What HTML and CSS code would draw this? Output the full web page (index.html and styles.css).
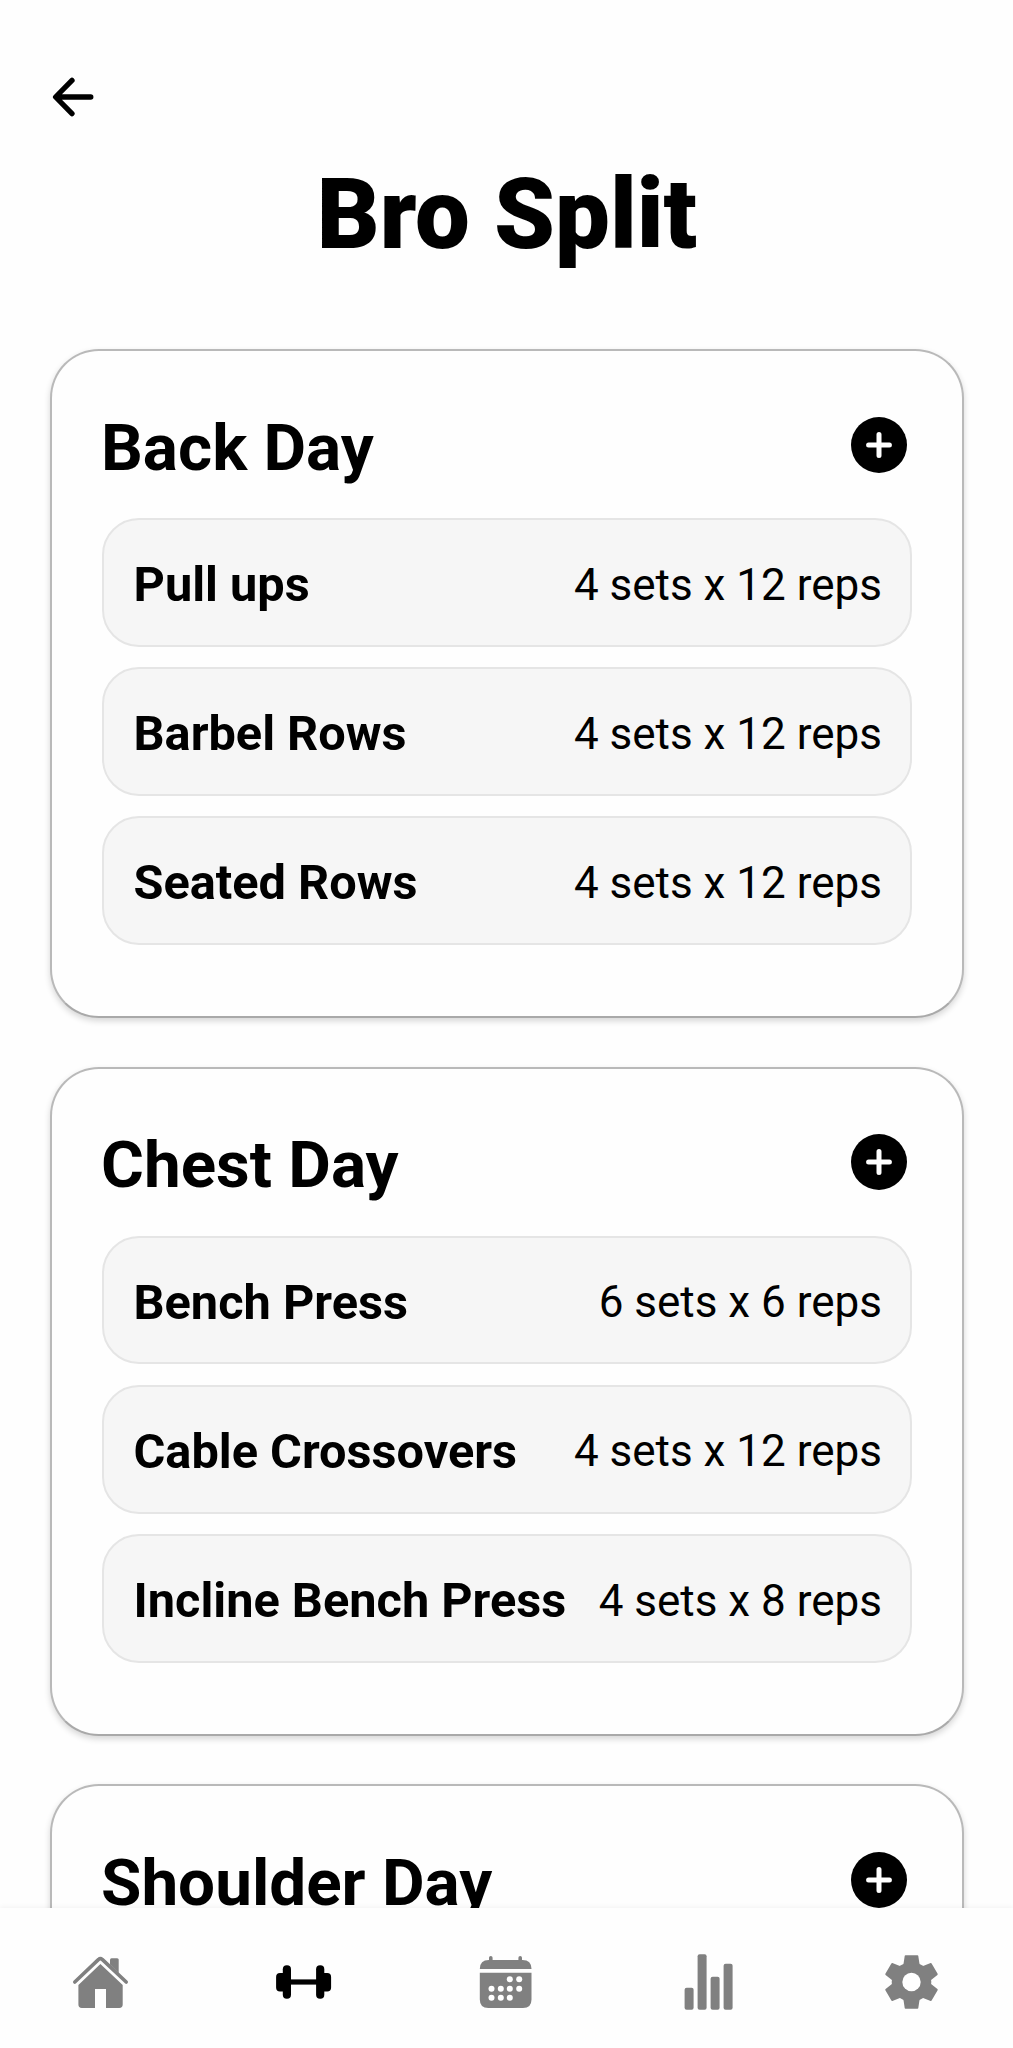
FILE: index.html
```html
<!DOCTYPE html>
<html lang="en">
<head>
<meta charset="utf-8">
<title>Bro Split</title>
<link rel="stylesheet" href="styles.css">
</head>
<body>
<svg width="0" height="0" class="defs" aria-hidden="true">
  <symbol id="plus" viewBox="0 0 56 56">
    <circle cx="28" cy="28" r="28"/>
    <path d="M28 17.6v20.8M17.6 28h20.8" stroke="#fff" stroke-width="5" stroke-linecap="round"/>
  </symbol>
</svg>
<div class="app">
  <main class="screen">
    <a class="back" aria-label="Back">
      <svg width="42" height="40" viewBox="0 0 42 40"><path d="M20 3.4 3.6 20 20 36.6M4 20h34.8" fill="none" stroke="#000" stroke-width="5.3" stroke-linecap="round" stroke-linejoin="round"/></svg>
    </a>
    <h1 class="title">Bro Split</h1>
    <section class="card">
      <header class="card-head"><h2>Back Day</h2><svg class="add"><use href="#plus"/></svg></header>
      <ul class="list">
        <li class="row"><strong>Pull ups</strong><span>4 sets x 12 reps</span></li>
        <li class="row"><strong>Barbel Rows</strong><span>4 sets x 12 reps</span></li>
        <li class="row"><strong>Seated Rows</strong><span>4 sets x 12 reps</span></li>
      </ul>
    </section>
    <section class="card">
      <header class="card-head"><h2>Chest Day</h2><svg class="add"><use href="#plus"/></svg></header>
      <ul class="list">
        <li class="row"><strong>Bench Press</strong><span>6 sets x 6 reps</span></li>
        <li class="row"><strong>Cable Crossovers</strong><span>4 sets x 12 reps</span></li>
        <li class="row"><strong>Incline Bench Press</strong><span>4 sets x 8 reps</span></li>
      </ul>
    </section>
    <section class="card">
      <header class="card-head"><h2>Shoulder Day</h2><svg class="add"><use href="#plus"/></svg></header>
      <ul class="list"></ul>
    </section>
  </main>
  <nav class="tabs">
    <a class="tab"><svg viewBox="0 0 60 60">
      <path d="M3.8 30 27.6 7.4Q29.4 5.6 31.2 7.4L55.2 30" fill="none" stroke="currentColor" stroke-width="3.6" stroke-linecap="round"/>
      <path d="M39 12.5V7.8Q39 6.3 40.5 6.3h5.7q1.5 0 1.5 1.5V21z"/>
      <path d="M29.4 12 51.7 33v19.6q0 3.4-3.4 3.4H35V37H24v19H10.8q-3.4 0-3.4-3.4V33z"/>
    </svg></a>
    <a class="tab active"><svg viewBox="0 0 60 60">
      <rect x="14" y="27.4" width="32" height="5.2"/>
      <rect x="8.8" y="13.3" width="8.2" height="33.4" rx="4"/>
      <rect x="42.1" y="13.3" width="8.2" height="33.4" rx="4"/>
      <path d="M11 21H6Q2.1 21 2.1 25v10.5q0 4 3.9 4H11zM48 21h5.2q3.9 0 3.9 4v10.5q0 4-3.9 4H48z"/>
    </svg></a>
    <a class="tab"><svg viewBox="0 0 60 60">
      <path d="M14.8 5.7V10M44.2 5.7V10" stroke="currentColor" stroke-width="3.6" stroke-linecap="round"/>
      <path d="M3.8 17q0-9 9-9h33.7q9 0 9 9z"/>
      <path d="M3.8 20.7h51.7V47.5q0 8.5-8.5 8.5H12.3q-8.5 0-8.5-8.5z"/>
      <g fill="#fff"><circle cx="33.8" cy="27.3" r="3"/><circle cx="43.2" cy="27.3" r="3"/><circle cx="15.5" cy="36.7" r="3"/><circle cx="24.8" cy="36.7" r="3"/><circle cx="33.8" cy="36.7" r="3"/><circle cx="43.2" cy="36.7" r="3"/><circle cx="15.5" cy="45.7" r="3"/><circle cx="24.8" cy="45.7" r="3"/><circle cx="33.8" cy="45.7" r="3"/></g>
    </svg></a>
    <a class="tab"><svg viewBox="0 0 60 60">
      <rect x="5.6" y="35.7" width="9" height="22" rx="2"/>
      <rect x="18.6" y="2.3" width="9" height="55.4" rx="2"/>
      <rect x="31.6" y="24.7" width="9" height="33" rx="2"/>
      <rect x="44.6" y="11.7" width="9" height="46" rx="2"/>
    </svg></a>
    <a class="tab"><svg viewBox="0 0 60 60">
      <defs><path id="tooth" d="M-6 -26.7H6Q6.7 -26.7 6.8 -26L8 -18 0 -8-8 -18-6.8 -26Q-6.7 -26.7-6 -26.7z"/></defs>
      <g transform="translate(29.5 30)">
        <use href="#tooth"/><use href="#tooth" transform="rotate(60)"/><use href="#tooth" transform="rotate(120)"/><use href="#tooth" transform="rotate(180)"/><use href="#tooth" transform="rotate(240)"/><use href="#tooth" transform="rotate(300)"/>
        <circle r="19.8"/><circle r="9.2" fill="#fff"/>
      </g>
    </svg></a>
  </nav>
</div>
</body>
</html>
```
FILE: styles.css
```css
* { box-sizing: border-box; }
body { margin: 0; background: #fefefe; color: #000; font-family: Roboto, "Liberation Sans", sans-serif; }
h1, h2, ul { margin: 0; padding: 0; }
.defs { display: block; height: 0; }
.app { height: 2048px; display: flex; flex-direction: column; overflow: hidden; }
.screen { flex: 1; min-height: 0; overflow: hidden; padding: 77px 49px 0 50px; }
.back { display: block; width: 42px; height: 40px; margin-left: 2px; }
.back svg { display: block; }
.title { height: 116px; margin: 40px 0 76px; line-height: 116px; font-size: 97.5px; font-weight: 900; text-align: center; }
.card { height: 669px; margin-bottom: 48.7px; padding: 65.5px 50px 0; background: #fefefe; border: 2px solid #b9b9b9; border-bottom-color: #a9a9a9; border-radius: 49px; box-shadow: 0 3px 6px rgba(0, 0, 0, .16); }
.card-head { height: 77px; margin-bottom: 24.5px; display: flex; justify-content: space-between; padding-right: 5px; }
.card-head h2 { height: 61px; margin-left: -1px; font-size: 65.6px; line-height: 61px; font-weight: 700; }
.add { width: 56px; height: 56px; }
.list { list-style: none; display: flex; flex-direction: column; gap: 20.5px; }
.row { height: 128.7px; padding: 4.5px 28px 0 29.5px; display: flex; align-items: center; justify-content: space-between; background: #f6f6f6; border: 2px solid #e5e5e5; border-radius: 37px; white-space: nowrap; }
.row strong { font-size: 48.7px; font-weight: 700; }
.row span { font-size: 44px; }
.tabs { position: relative; height: 140px; display: grid; grid-template-columns: repeat(5, 1fr); background: #fefefe; box-shadow: 0 0 6px rgba(0, 0, 0, .07); }
.tab { display: flex; justify-content: center; padding-top: 44px; color: #808080; }
.tab.active { color: #000; }
.tab svg { width: 60px; height: 60px; fill: currentColor; }
```
